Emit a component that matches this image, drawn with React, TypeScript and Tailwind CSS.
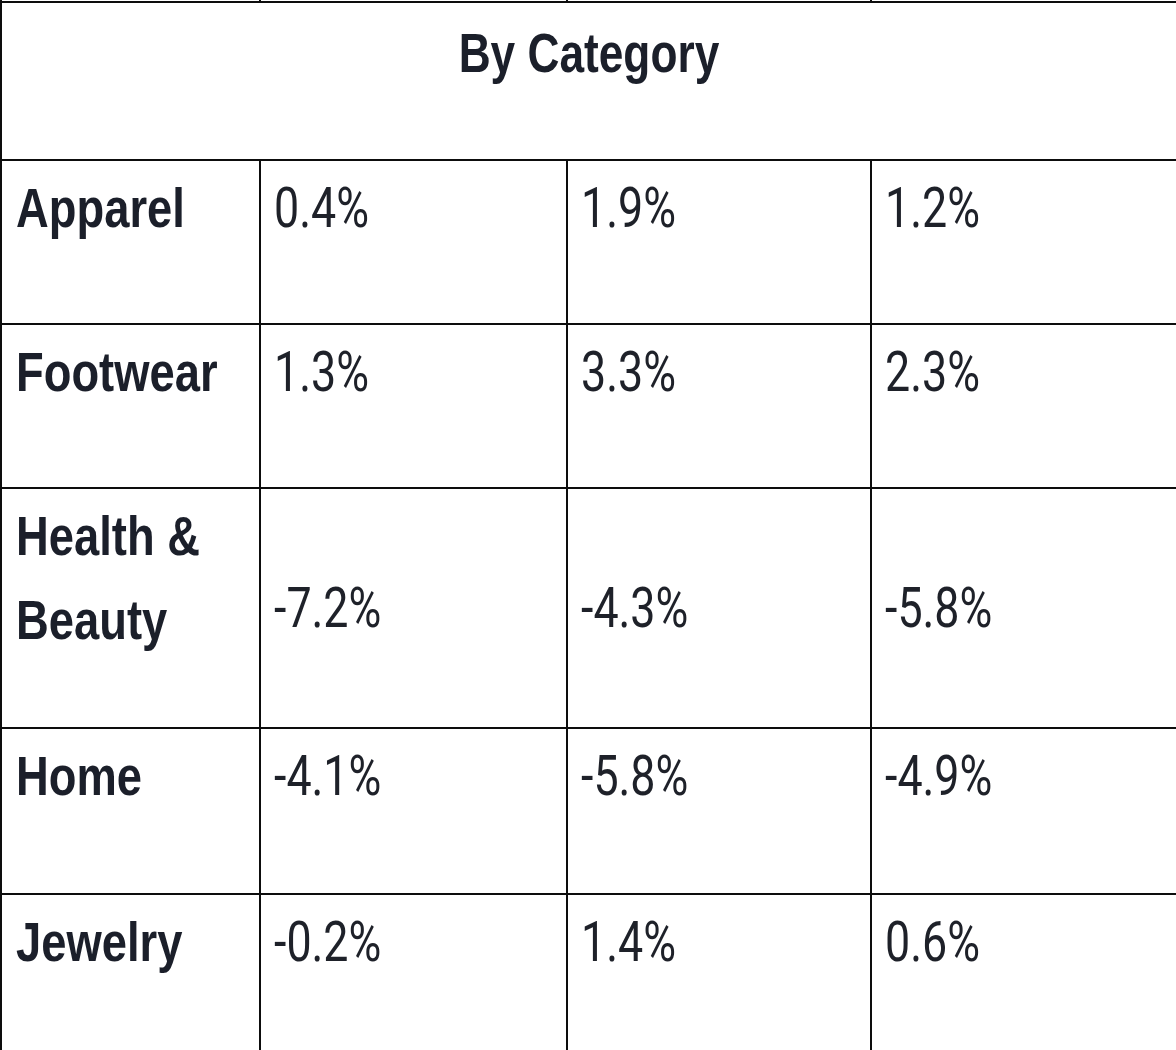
import React from "react";

const rows: { label: string[]; vals: string[]; h: string; center?: boolean }[] = [
  { label: ["Apparel"], vals: ["0.4%", "1.9%", "1.2%"], h: "h-[162px]" },
  { label: ["Footwear"], vals: ["1.3%", "3.3%", "2.3%"], h: "h-[162px]" },
  { label: ["Health &", "Beauty"], vals: ["-7.2%", "-4.3%", "-5.8%"], h: "h-[238px]", center: true },
  { label: ["Home"], vals: ["-4.1%", "-5.8%", "-4.9%"], h: "h-[164px]" },
  { label: ["Jewelry"], vals: ["-0.2%", "1.4%", "0.6%"], h: "h-[200px]" },
];

const labelFont = { fontFamily: '"Liberation Sans", Arial, sans-serif' };
const numFont = { fontFamily: 'Roboto, "Liberation Sans", Arial, sans-serif' };

export default function App() {
  return (
    <div className="w-[1176px] h-[1050px] overflow-hidden bg-white">
      <div className="grid grid-cols-[257px_305px_302px_1fr] gap-[2px] bg-[#0d0d0d] pl-[2px]">
        <div className="h-px bg-white" />
        <div className="h-px bg-white" />
        <div className="h-px bg-white" />
        <div className="h-px bg-white" />

        <div className="col-span-4 h-[156px] bg-white pt-[8px] text-center">
          <span
            className="inline-block origin-center scale-x-[0.79] text-[56px] leading-[84px] font-bold text-[#1b1f2a]"
            style={labelFont}
          >
            By Category
          </span>
        </div>

        {rows.map((r) => (
          <React.Fragment key={r.label.join(" ")}>
            <div className={`${r.h} bg-white pl-[14px] pt-[5px]`}>
              <span
                className="inline-block origin-left scale-x-[0.81] text-[56px] leading-[84px] font-bold text-[#1b1f2a] whitespace-nowrap"
                style={labelFont}
              >
                {r.label.map((l, i) => (
                  <React.Fragment key={l}>
                    {i > 0 && <br />}
                    {l}
                  </React.Fragment>
                ))}
              </span>
            </div>
            {r.vals.map((v, i) => (
              <div
                key={i}
                className={`${r.h} bg-white pl-[13px] flex ${r.center ? "items-center" : "items-start pt-[5px]"}`}
              >
                <span
                  className="inline-block origin-left scale-x-[0.8] text-[56px] leading-[84px] font-normal text-[#1e2129] whitespace-nowrap"
                  style={numFont}
                >
                  {v}
                </span>
              </div>
            ))}
          </React.Fragment>
        ))}
      </div>
    </div>
  );
}
